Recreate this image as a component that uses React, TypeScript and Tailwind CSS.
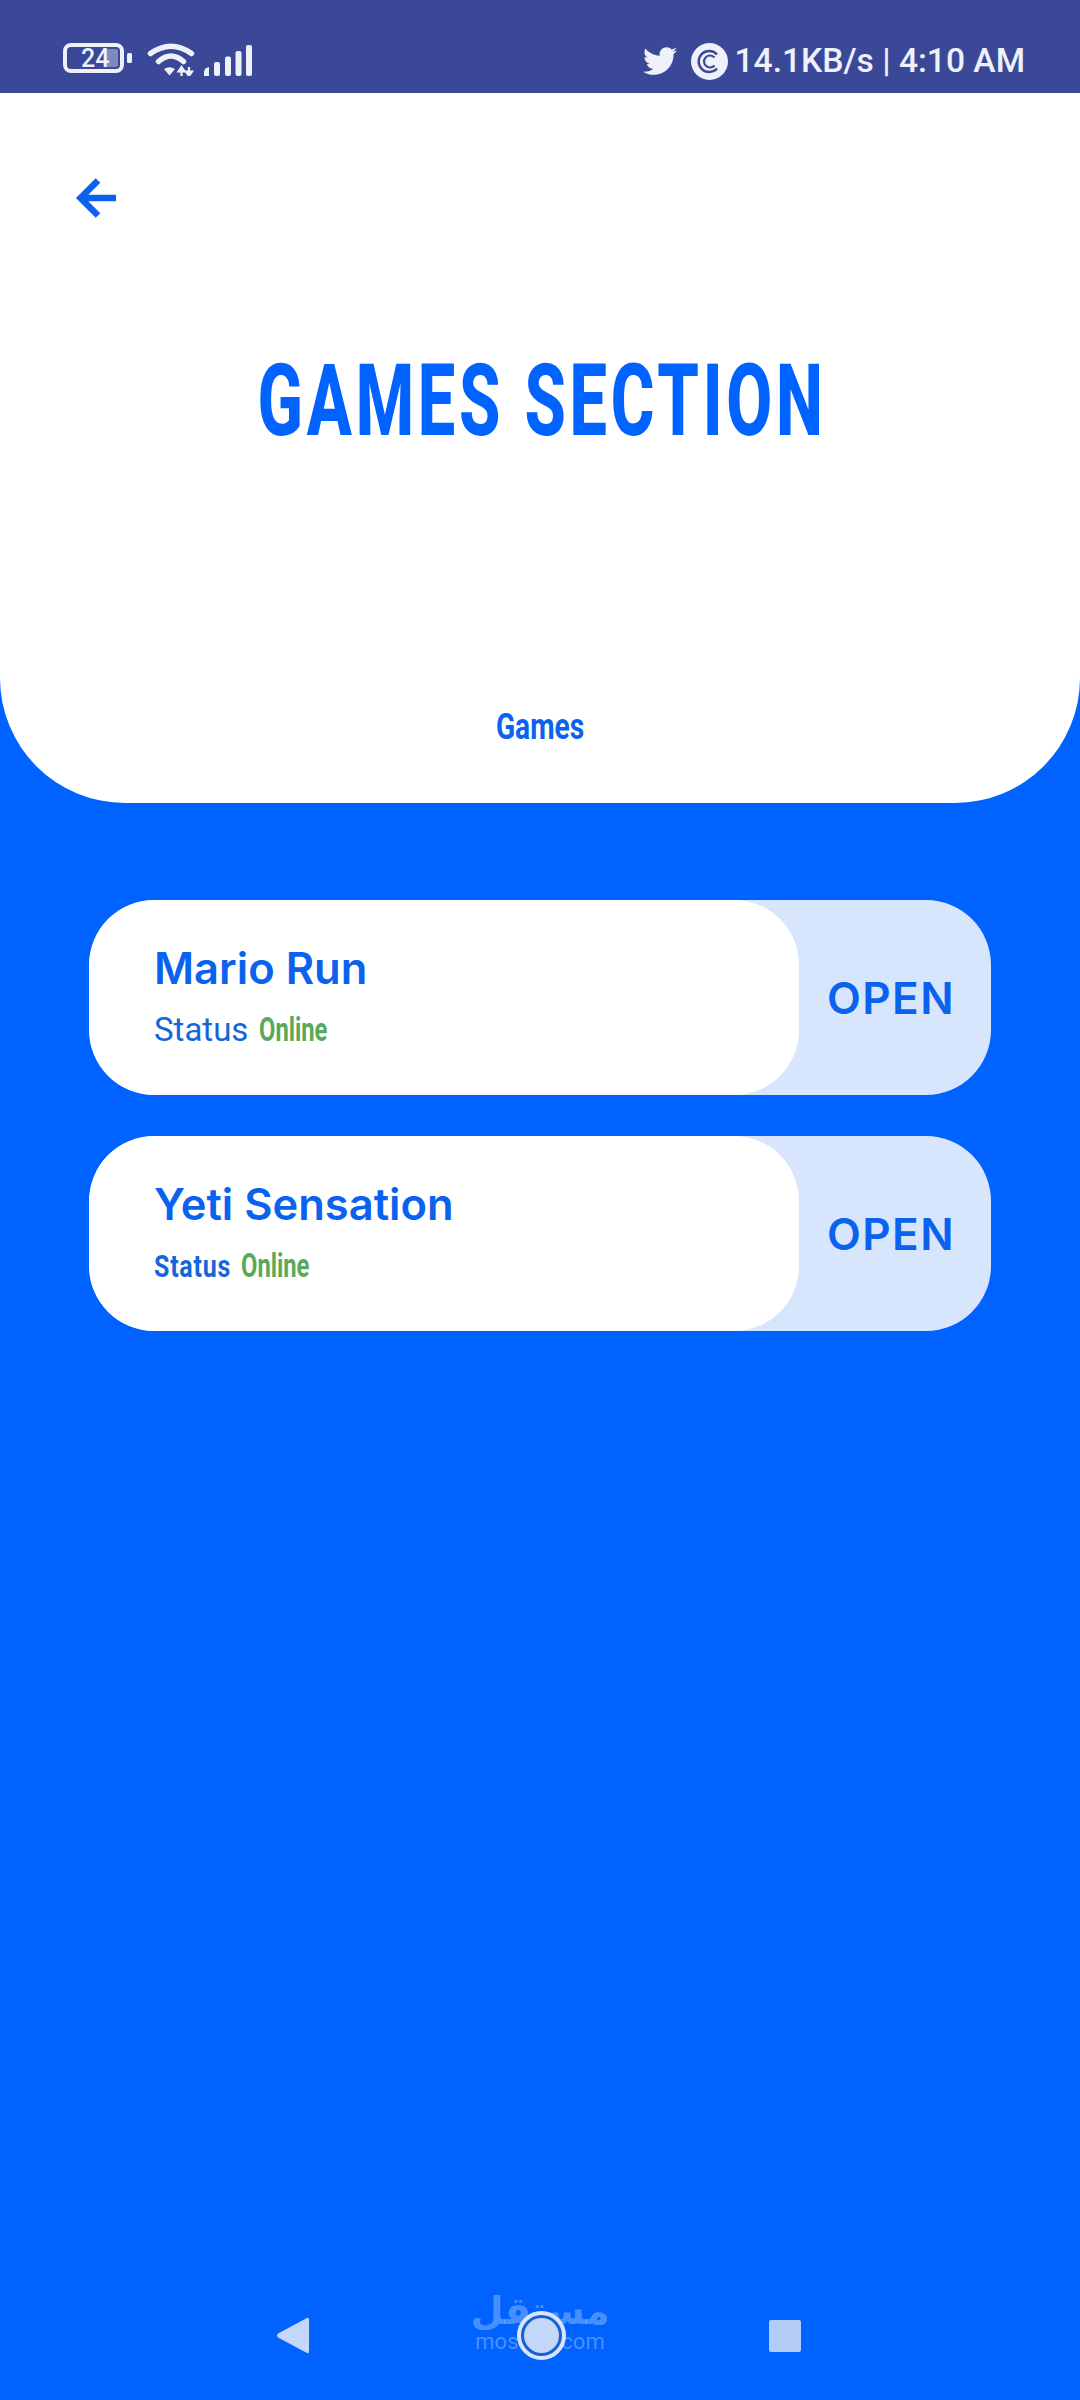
import { FaTwitter } from "react-icons/fa";

function Battery() {
  return (
    <svg width="70" height="30" viewBox="0 0 70 30" className="block">
      <rect x="2" y="2" width="57" height="26" rx="6" fill="none" stroke="#eef0fa" strokeWidth="4" />
      <rect x="42" y="6" width="13" height="18" rx="2" fill="#8088c0" />
      <rect x="64" y="10" width="5" height="10" rx="1.5" fill="#eef0fa" />
      <text x="18" y="24" fontSize="25" fontWeight="500" fill="#eef0fa" fontFamily="Roboto, sans-serif">24</text>
    </svg>
  );
}

function Wifi() {
  return (
    <svg width="48" height="33" viewBox="0 0 48 33" className="block">
      <path d="M3.5 10.5 Q24 -4 44.5 10.5" fill="none" stroke="#eef0fa" strokeWidth="5.5" strokeLinecap="round" />
      <path d="M11.5 18.5 Q24 7.5 36.5 18.5" fill="none" stroke="#eef0fa" strokeWidth="5.5" strokeLinecap="round" />
      <path d="M17 26 Q22.5 22.5 28 26 L22.5 32.5 Z" fill="#eef0fa" />
      <path d="M34.5 33 V27 M34.5 24 L31.5 28.5 H37.5 Z" fill="#eef0fa" stroke="#eef0fa" strokeWidth="2.2" />
      <path d="M42 24 V30 M42 33 L39 28.5 H45 Z" fill="#eef0fa" stroke="#eef0fa" strokeWidth="2.2" />
    </svg>
  );
}

function Signal() {
  return (
    <svg width="48" height="31" viewBox="0 0 48 31" className="block">
      <path d="M0 31 V27 Q0 23 5 22 V31 Z" fill="#eef0fa" />
      <rect x="10" y="17" width="6" height="14" rx="2" fill="#eef0fa" />
      <rect x="21" y="11.5" width="6" height="19.5" rx="2" fill="#eef0fa" />
      <rect x="31.5" y="6" width="6" height="25" rx="2" fill="#eef0fa" />
      <rect x="42" y="0" width="6" height="31" rx="2" fill="#eef0fa" />
    </svg>
  );
}

function CopyCircle() {
  return (
    <svg width="37" height="37" viewBox="0 0 37 37" className="block">
      <circle cx="18.5" cy="18.5" r="18.5" fill="#eef0fa" />
      <path d="M26 11.5 A10.5 10.5 0 1 0 26 25.5" fill="none" stroke="#3b4898" strokeWidth="2.4" />
      <path d="M23.5 14.5 A6 6 0 1 0 23.5 22.5" fill="none" stroke="#3b4898" strokeWidth="2.2" />
    </svg>
  );
}

function Card({ title, narrowStatus }: { title: string; narrowStatus: boolean }) {
  return (
    <div className="flex h-[195px] overflow-hidden rounded-[65px] bg-[#d7e6fd]">
      <div className="flex w-[710px] flex-col rounded-[65px] bg-white pl-[65px] pt-[40px]">
        <div className="text-[43.5px] leading-[56px] font-semibold whitespace-nowrap text-[#0a62ee] font-['Inter',sans-serif]">
          {title}
        </div>
        <div className="mt-[15px] flex h-[38px] items-center">
          {narrowStatus ? (
            <span className="block w-[75px] origin-left scale-x-[0.78] text-[32px] leading-[38px] font-bold tracking-[1px] whitespace-nowrap text-[#1565d8] font-['Roboto',sans-serif]">
              Status
            </span>
          ) : (
            <span className="block w-[93px] text-[33px] leading-[38px] whitespace-nowrap text-[#1565d8] font-['Roboto',sans-serif]">
              Status
            </span>
          )}
          <span className="ml-[12px] block w-[66px] origin-left scale-x-[0.72] text-[33px] leading-[38px] font-bold whitespace-nowrap text-[#5aa95a] font-['Roboto',sans-serif]">
            Online
          </span>
        </div>
      </div>
      <div className="flex flex-1 items-center justify-center pr-[8px] text-[44px] font-semibold tracking-[1.5px] text-[#0a62ee] font-['Inter',sans-serif]">
        OPEN
      </div>
    </div>
  );
}

export default function App() {
  return (
    <div className="flex h-[2400px] w-[1080px] flex-col overflow-hidden bg-[#0062ff]">
      <div className="flex h-[93px] items-start justify-between bg-[#3b4898] pl-[63px] pr-[55px] pt-[43px]">
        <div className="flex items-start gap-[14px]">
          <Battery />
          <Wifi />
          <div className="-ml-[5px] pt-[2px]">
            <Signal />
          </div>
        </div>
        <div className="-mt-[1px] flex items-center">
          <FaTwitter className="mr-[14px] text-[34px] text-[#eef0fa]" />
          <CopyCircle />
          <span className="ml-[7px] text-[33.6px] leading-[38px] font-medium whitespace-nowrap text-[#eef0fa] font-['Roboto',sans-serif]">
            14.1KB/s | 4:10 AM
          </span>
        </div>
      </div>

      <div className="flex h-[710px] flex-col rounded-b-[125px] bg-white">
        <div className="pl-[68px] pt-[76px]">
          <svg width="58" height="58" viewBox="0 0 58 58" className="block" fill="none" stroke="#0a62ee" strokeWidth="6.5">
            <path d="M48 29 H13 M30 11.5 L12.5 29 L30 46.5" />
          </svg>
        </div>
        <div className="mt-[111px] flex justify-center pl-[5px]">
          <h1 className="scale-x-[0.66] text-[101px] leading-[126px] font-extrabold tracking-[5.7px] whitespace-nowrap text-[#0062ff] font-['Roboto',sans-serif]">
            GAMES SECTION
          </h1>
        </div>
        <div className="mt-[241px] flex justify-center">
          <span className="scale-x-[0.76] text-[37px] leading-[44px] font-bold whitespace-nowrap text-[#0a62ee] font-['Roboto',sans-serif]">
            Games
          </span>
        </div>
      </div>

      <div className="mt-[97px] flex flex-col gap-[41px] px-[89px]">
        <Card title="Mario Run" narrowStatus={false} />
        <Card title="Yeti Sensation" narrowStatus={true} />
      </div>

      <div className="relative mt-auto mb-[40px] flex h-[49px] items-center justify-center pr-[3px]">
        <div className="absolute left-[474px] top-[-19px] flex w-[132px] flex-col items-center text-white/30">
          <span dir="rtl" className="text-[38px] leading-[38px] font-bold whitespace-nowrap font-['DejaVu_Sans',sans-serif]">
            مستقل
          </span>
          <span className="text-[22px] leading-[24px] whitespace-nowrap font-['Roboto',sans-serif]">
            mostaql.com
          </span>
        </div>
        <svg width="32" height="37" viewBox="0 0 32 37" className="relative mr-[208px] block">
          <path d="M30 1 Q32 0 32 3 V34 Q32 37 30 36 L1 20.5 Q-1 18.5 1 16.5 Z" fill="#c3d7fb" />
        </svg>
        <svg width="49" height="49" viewBox="0 0 49 49" className="relative block">
          <circle cx="24.5" cy="24.5" r="22.5" fill="#1a5fd0" stroke="#d8e4fb" strokeWidth="4" />
          <circle cx="24.5" cy="24.5" r="17.5" fill="#c3d7fb" />
        </svg>
        <div className="relative ml-[203px] h-[32px] w-[32px] rounded-[2px] bg-[#b3cdf8]" />
      </div>
    </div>
  );
}
